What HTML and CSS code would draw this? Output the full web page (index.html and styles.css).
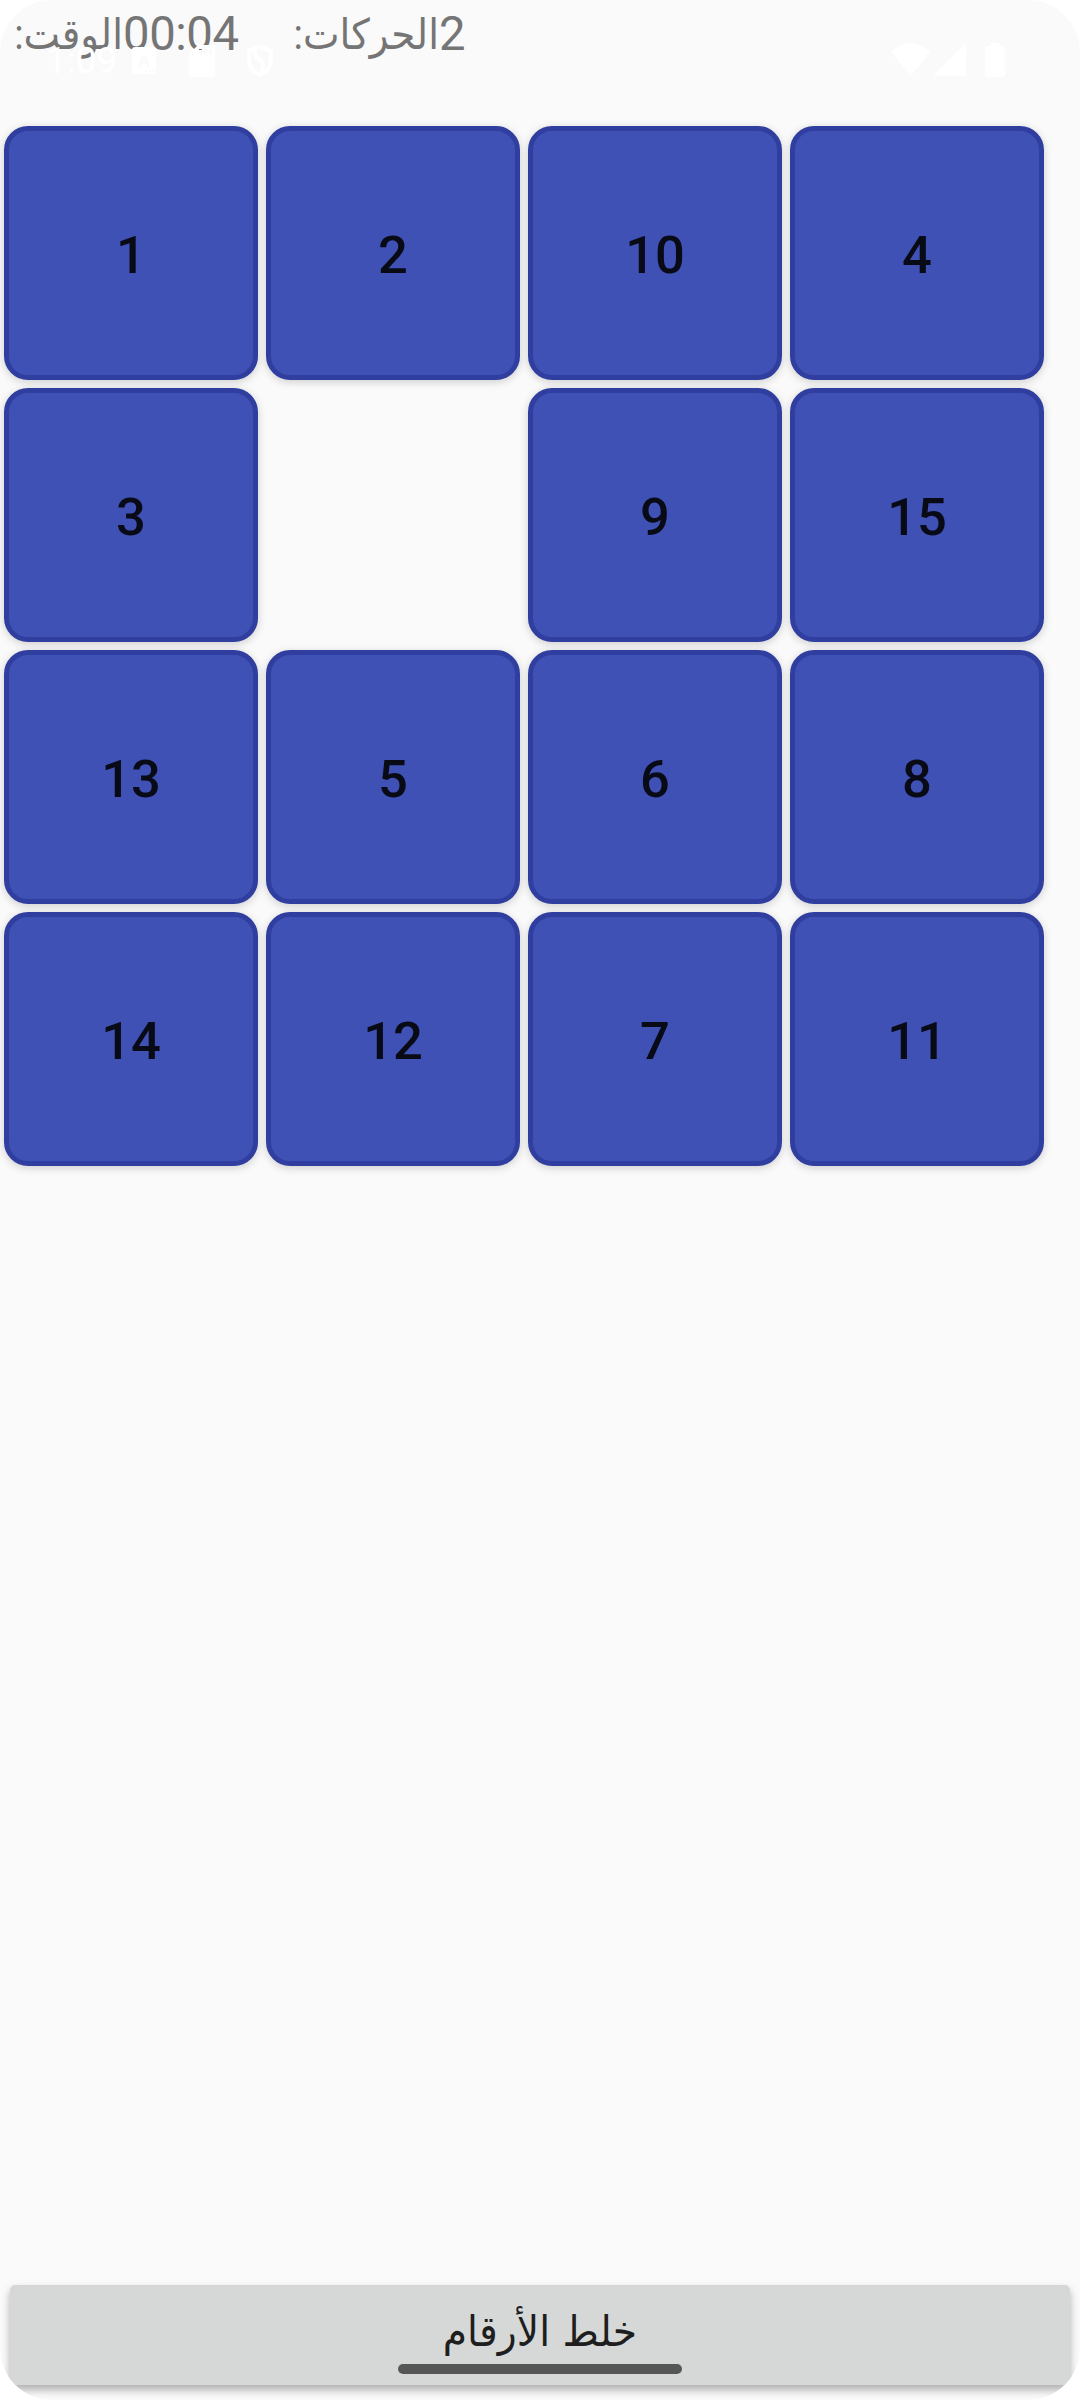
FILE: index.html
```html
<!DOCTYPE html>
<html lang="ar">
<head>
<meta charset="utf-8">
<title>لعبة الأرقام</title>
<link rel="stylesheet" href="styles.css">
</head>
<body>
<div class="screen">
  <header class="stats">
    <span class="label label-time" dir="rtl">الوقت:</span>
    <span class="value value-time">00:04</span>
    <span class="label label-moves" dir="rtl">الحركات:</span>
    <span class="value">2</span>
  </header>
  <main class="board">
    <button class="tile">1</button>
    <button class="tile">2</button>
    <button class="tile">10</button>
    <button class="tile">4</button>
    <button class="tile">3</button>
    <div class="empty"></div>
    <button class="tile">9</button>
    <button class="tile">15</button>
    <button class="tile">13</button>
    <button class="tile">5</button>
    <button class="tile">6</button>
    <button class="tile">8</button>
    <button class="tile">14</button>
    <button class="tile">12</button>
    <button class="tile">7</button>
    <button class="tile">11</button>
  </main>
  <footer class="actions">
    <button class="shuffle" dir="rtl"><span class="shuffle-text">خلط الأرقام</span></button>
  </footer>
  <div class="status">
    <span class="clock">1:09</span>
    <svg class="icons-left" width="146" height="36" viewBox="0 0 146 36">
      <path fill-rule="evenodd" d="M4 5h18a3 3 0 0 1 3 3v21a3 3 0 0 1-3 3H4a3 3 0 0 1-3-3V8a3 3 0 0 1 3-3zM11.500 13L7 25h3l1-3h4l1 3h3L14.500 13zM11.800 20l1.200-4 1.200 4zM14 28v2h2v-2zM18 28v2h2v-2zM22 28v2h2v-2z"/>
      <path fill-rule="evenodd" d="M67 3h14a3 3 0 0 1 3 3v26a3 3 0 0 1-3 3H61a3 3 0 0 1-3-3V12zM68 7v5h3V7zM73 7v5h3V7zM78 7v5h3V7z"/>
      <path class="outline" d="M129 5l11 4v9q0 10-11 15q-11-5-11-15V9zM125 6q-3 8 3 11t3 14"/>
    </svg>
    <svg class="icons-right" width="116" height="36" viewBox="0 0 116 36">
      <path d="M0 10Q20-8 39 10L20 34zM75 1v33H42zM94 7a3 3 0 0 1 3-3h3V1h8v3h3a3 3 0 0 1 3 3v25a3 3 0 0 1-3 3H97a3 3 0 0 1-3-3z"/>
    </svg>
  </div>
  <div class="nav-handle"></div>
</div>
</body>
</html>
```

FILE: styles.css
```css
body {
  margin: 0;
  background: #fff;
}

.screen {
  position: relative;
  display: flex;
  flex-direction: column;
  width: 1080px;
  height: 2400px;
  overflow: hidden;
  border-radius: 52px;
  background: #fafafa;
  font-family: Roboto, "DejaVu Sans", sans-serif;
}

.stats {
  display: flex;
  height: 122px;
  padding-left: 12px;
  color: #757575;
  font-size: 47.25px;
  line-height: 68px;
  white-space: nowrap;
}

.label {
  font-size: 42px;
  line-height: 70px;
  transform: scaleX(0.925);
  transform-origin: 100% 50%;
}

.label-time { width: 111px; }
.label-moves { width: 147px; }
.value-time { width: 169px; letter-spacing: -0.4px; }

.board {
  display: grid;
  grid-template-columns: repeat(4, 254px);
  grid-auto-rows: 254px;
  gap: 8px;
  padding: 4px;
}

.tile {
  padding: 3px 0 0;
  border: 5px solid #303f9f;
  border-radius: 24px;
  background: #3f51b5;
  box-shadow: 0 2px 8px rgba(0, 0, 0, 0.18);
  color: #080a16;
  font: 500 52.5px/60px Roboto, sans-serif;
}

.actions {
  margin-top: auto;
  padding: 0 10px 15px;
}

.shuffle {
  display: block;
  width: 100%;
  height: 100px;
  padding: 0 0 7px;
  border: 0;
  border-radius: 5px;
  background: #d6d8d7;
  box-shadow: 0 5px 9px rgba(0, 0, 0, 0.3);
  color: #1e1e1e;
  font: 42px/90px "DejaVu Sans", sans-serif;
}

.shuffle-text {
  display: inline-block;
  white-space: nowrap;
  transform: scaleX(0.935);
}

.status {
  position: absolute;
  inset: 42px 73px auto 46px;
  display: flex;
  height: 36px;
  color: #fff;
  fill: #fff;
}

.clock {
  width: 85px;
  font-size: 37px;
  line-height: 38px;
}

.icons-right { margin-left: auto; }

.outline {
  fill: none;
  stroke: #fff;
  stroke-width: 4;
}

.nav-handle {
  position: absolute;
  left: 398px;
  top: 2364px;
  width: 284px;
  height: 10px;
  border-radius: 5px;
  background: #565656;
}
```
